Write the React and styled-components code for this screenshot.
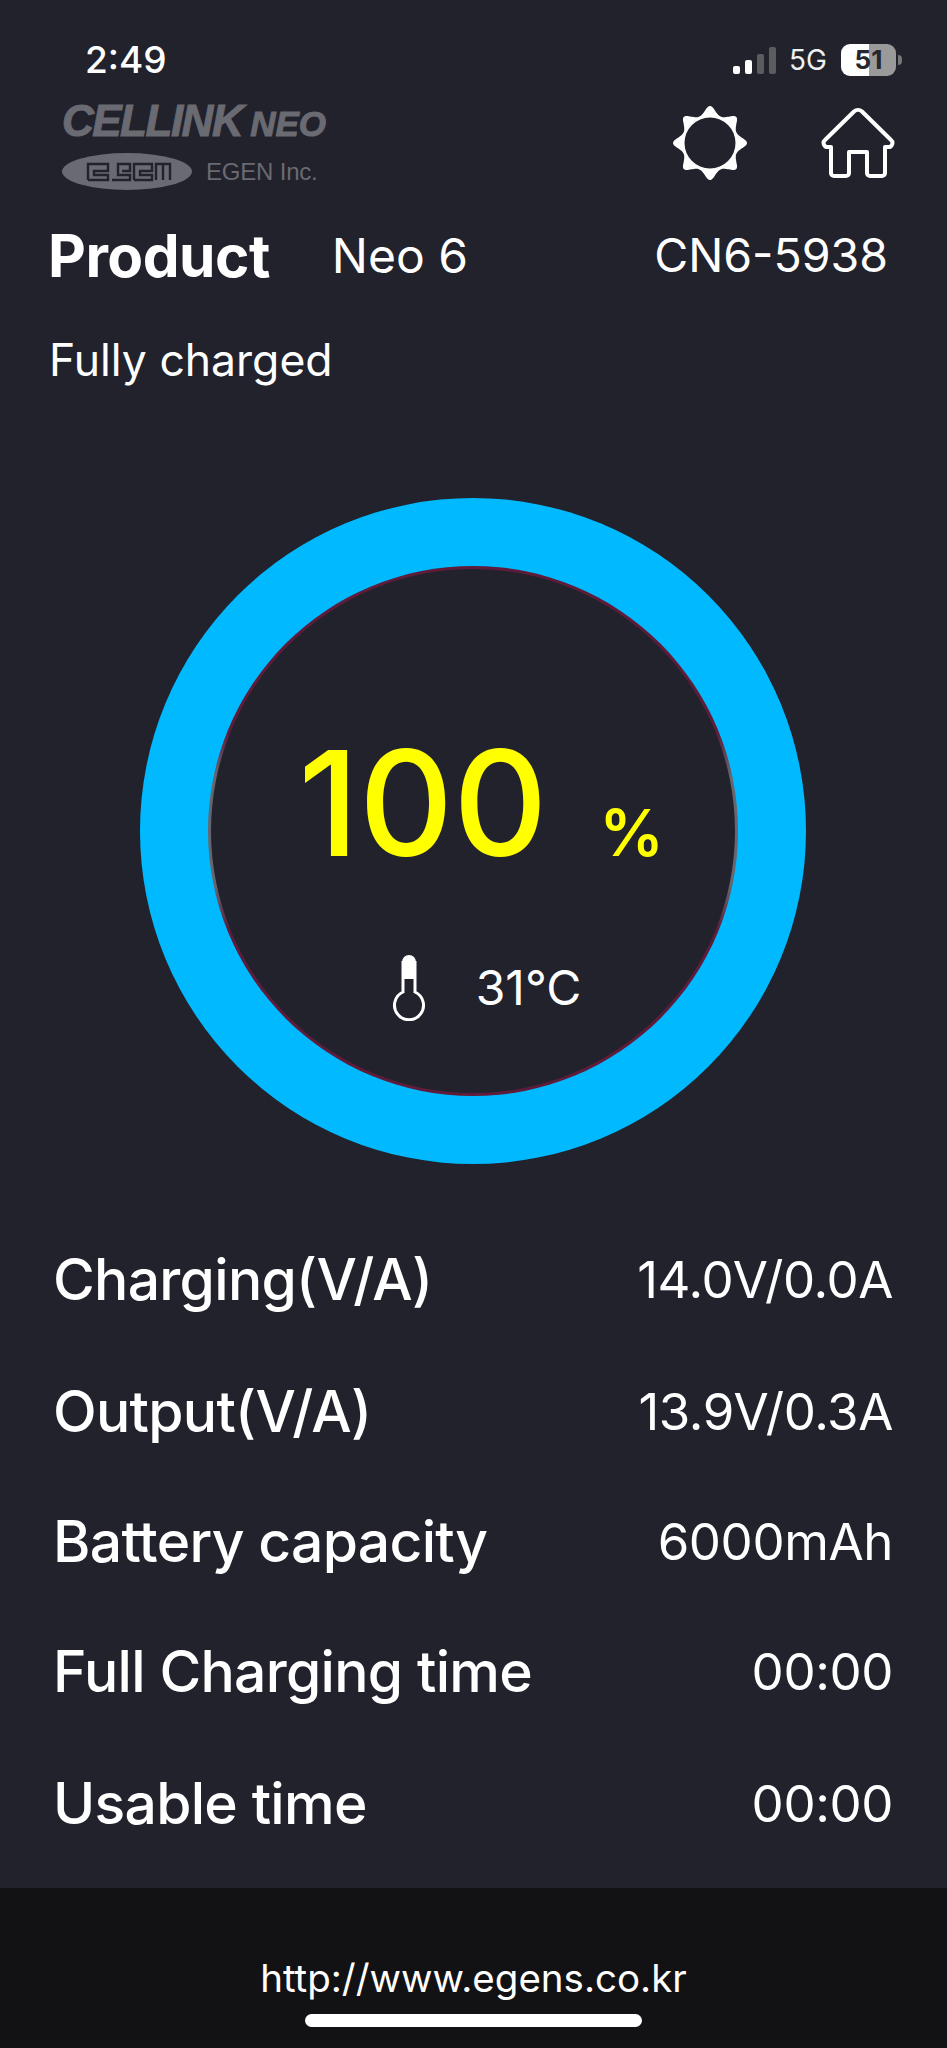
import React from 'react';
import styled, { createGlobalStyle } from 'styled-components';

const Bg = '#21222c';
const LogoGray = '#6a6a72';

const GlobalStyle = createGlobalStyle`
  html, body { margin: 0; padding: 0; background: ${Bg}; }
  * { box-sizing: border-box; }
`;

const Page = styled.div`
  width: 947px;
  height: 2048px;
  display: flex;
  flex-direction: column;
  background: ${Bg};
  color: #fff;
  font-family: Inter, "Liberation Sans", Arial, sans-serif;
  overflow: hidden;
`;

const StatusBar = styled.div`
  height: 76px;
  padding: 44px 45px 0 85px;
  display: flex;
  justify-content: space-between;
  align-items: center;
`;

const Time = styled.div`
  font-size: 37px;
  font-weight: 500;
  line-height: 32px;
`;

const StatusRight = styled.div`
  display: flex;
  align-items: center;
`;

const NetLabel = styled.div`
  font-size: 28px;
  line-height: 32px;
  margin: 0 14px 0 12px;
  color: #f0f0f0;
`;

const Battery = styled.div`
  width: 55px;
  height: 32px;
  border-radius: 9px;
  background: linear-gradient(90deg, #fff 0 51%, #9a9a9a 51% 100%);
  color: #26262c;
  font-size: 26px;
  font-weight: 700;
  line-height: 32px;
  text-align: center;
`;

const BatteryNub = styled.div`
  width: 4px;
  height: 10px;
  margin-left: 2px;
  border-radius: 0 4px 4px 0;
  background: #777;
`;

const TopBar = styled.div`
  height: 146px;
  padding: 27px 52px 0 62px;
  display: flex;
  justify-content: space-between;
  align-items: flex-start;
`;

const Logo = styled.div`
  display: flex;
  flex-direction: column;
  color: ${LogoGray};
  font-family: "Liberation Sans", Arial, sans-serif;
`;

const LogoMain = styled.div`
  display: flex;
  align-items: baseline;
  height: 50px;
  font-style: italic;
  font-weight: 700;
  line-height: 36px;
  -webkit-text-stroke: 1px ${LogoGray};
`;

const LogoBig = styled.span`
  font-size: 44px;
  letter-spacing: -1.5px;
  margin-right: 8px;
`;

const LogoSmall = styled.span`
  font-size: 35px;
`;

const LogoSub = styled.div`
  display: flex;
  align-items: center;
  gap: 14px;
  font-size: 24px;
  letter-spacing: -0.2px;
`;

const NavIcons = styled.div`
  display: flex;
  align-items: center;
  gap: 74px;
  margin-top: 3px;
`;

const ProductRow = styled.div`
  display: flex;
  align-items: center;
  height: 66px;
  padding: 0 59px 0 48px;
`;

const ProductLabel = styled.div`
  font-size: 58.5px;
  font-weight: 700;
  letter-spacing: -0.5px;
  margin-right: 62px;
`;

const ProductName = styled.div`
  font-size: 48px;
`;

const Serial = styled.div`
  margin-left: auto;
  font-size: 46.5px;
`;

const StateText = styled.div`
  margin-top: 44px;
  padding-left: 49px;
  font-size: 44.5px;
  line-height: 56px;
`;

const RingWrap = styled.div`
  display: flex;
  justify-content: center;
  margin-top: 110px;
  padding-right: 1px;
`;

const Ring = styled.div`
  width: 666px;
  height: 666px;
  border-radius: 50%;
  background: #00b9ff;
  display: flex;
  align-items: center;
  justify-content: center;
`;

const Dial = styled.div`
  width: 530px;
  height: 530px;
  border-radius: 50%;
  border: 3px solid transparent;
  background:
    linear-gradient(${Bg}, ${Bg}) padding-box,
    conic-gradient(
      #5e1c3a 0deg 68deg, #666670 78deg 102deg, #5e1c3a 112deg 248deg,
      #666670 258deg 282deg, #5e1c3a 292deg 360deg
    ) border-box;
  display: flex;
  flex-direction: column;
  align-items: center;
`;

const Reading = styled.div`
  display: flex;
  align-items: baseline;
  gap: 52px;
  margin-top: 182px;
  margin-left: 16px;
  color: #ffff00;
`;

const Percent = styled.div`
  font-size: 146px;
  font-weight: 500;
  letter-spacing: 0;
  line-height: 104px;
`;

const PercentSign = styled.div`
  font-size: 64px;
  font-weight: 600;
  line-height: 50px;
`;

const TempRow = styled.div`
  display: flex;
  align-items: center;
  gap: 50px;
  margin-top: 97px;
  margin-left: 27px;
`;

const TempText = styled.div`
  font-size: 48px;
  line-height: 54px;
`;

const Stats = styled.div`
  display: flex;
  flex-direction: column;
  margin-top: 49px;
  padding: 0 54px 0 53px;
`;

const StatRow = styled.div`
  height: ${p => p.$height}px;
  display: flex;
  justify-content: space-between;
  align-items: center;
`;

const StatName = styled.div`
  font-size: 57px;
  font-weight: 500;
  letter-spacing: -0.7px;
`;

const StatValue = styled.div`
  font-size: 51px;
  letter-spacing: -0.4px;
`;

const Footer = styled.div`
  margin-top: auto;
  height: 160px;
  background: #121214;
  display: flex;
  flex-direction: column;
  align-items: center;
`;

const FooterLink = styled.div`
  margin-top: 65px;
  font-size: 38.5px;
  line-height: 50px;
`;

const HomeBar = styled.div`
  margin-top: 11px;
  width: 337px;
  height: 13px;
  border-radius: 7px;
  background: #fff;
`;

const SignalBars = () => (
  <svg width="44" height="30" viewBox="0 0 44 30">
    <rect x="0" y="21" width="7" height="8" rx="2" fill="#fff" />
    <rect x="12" y="15" width="7" height="14" rx="2" fill="#fff" />
    <rect x="24" y="9" width="7" height="20" rx="2" fill="#5b5b60" />
    <rect x="36" y="2" width="7" height="27" rx="2" fill="#5b5b60" />
  </svg>
);

// scalloped disc with 8 points
const gearPath = () => {
  const pts = [];
  for (let i = 0; i < 180; i++) {
    const t = (i / 180) * Math.PI * 2;
    const c = Math.cos(8 * t);
    const r = 31.5 + 5.5 * (c > 0 ? Math.pow(c, 1.4) : -Math.pow(-c, 0.8) * 0.55);
    pts.push(`${(37 + r * Math.sin(t)).toFixed(2)} ${(37 - r * Math.cos(t)).toFixed(2)}`);
  }
  return `M${pts.join('L')}Z`;
};

const SettingsIcon = () => (
  <svg width="74" height="74" viewBox="0 0 74 74">
    <path d={gearPath()} fill="#fff" />
    <circle cx="37" cy="37" r="25.5" fill={Bg} />
  </svg>
);

const HomeIcon = () => (
  <svg width="74" height="74" viewBox="0 0 74 74" fill="none" stroke="#fff" strokeWidth="4" strokeLinejoin="round">
    <path d="M33 5.5a6 6 0 0 1 8 0L70 34a4 4 0 0 1-3 7H64V67a3 3 0 0 1-3 3H49a3 3 0 0 1-3-3V46H28V67a3 3 0 0 1-3 3H13a3 3 0 0 1-3-3V41H7a4 4 0 0 1-3-7Z" />
  </svg>
);

const ThermoIcon = () => (
  <svg width="34" height="66" viewBox="0 0 34 66">
    <path d="M10 24V7a7 7 0 0 1 14 0V24Z" fill="#fff" />
    <path d="M11 6V37A14.5 14.5 0 1 0 23 37V6" fill="none" stroke="#fff" strokeWidth="3" />
  </svg>
);

const EgenBadge = () => (
  <svg width="130" height="37" viewBox="0 0 130 37">
    <ellipse cx="65" cy="18.5" rx="65" ry="18.5" fill={LogoGray} />
    <g fill="none" stroke={Bg} strokeWidth="2.4">
      <path d="M26 27V11H46V18H32V22H46V27H26" />
      <path d="M50 27H68V22H56V11H68V18H60" />
      <path d="M72 27V11H90V18H78V22H90V27H72" />
      <path d="M94 27V11H108V27M101 11V27" />
    </g>
  </svg>
);

const stats = [
  { name: 'Charging(V/A)', value: '14.0V/0.0A', height: 132 },
  { name: 'Output(V/A)', value: '13.9V/0.3A', height: 133 },
  { name: 'Battery capacity', value: '6000mAh', height: 127 },
  { name: 'Full Charging time', value: '00:00', height: 132 },
  { name: 'Usable time', value: '00:00', height: 132 },
];

const App = () => (
  <Page>
    <GlobalStyle />
    <StatusBar>
      <Time>2:49</Time>
      <StatusRight>
        <SignalBars />
        <NetLabel>5G</NetLabel>
        <Battery>51</Battery>
        <BatteryNub />
      </StatusRight>
    </StatusBar>
    <TopBar>
      <Logo>
        <LogoMain>
          <LogoBig>CELLINK</LogoBig>
          <LogoSmall>NEO</LogoSmall>
        </LogoMain>
        <LogoSub>
          <EgenBadge />
          <span>EGEN Inc.</span>
        </LogoSub>
      </Logo>
      <NavIcons>
        <SettingsIcon />
        <HomeIcon />
      </NavIcons>
    </TopBar>
    <ProductRow>
      <ProductLabel>Product</ProductLabel>
      <ProductName>Neo 6</ProductName>
      <Serial>CN6-5938</Serial>
    </ProductRow>
    <StateText>Fully charged</StateText>
    <RingWrap>
      <Ring>
        <Dial>
          <Reading>
            <Percent>100</Percent>
            <PercentSign>%</PercentSign>
          </Reading>
          <TempRow>
            <ThermoIcon />
            <TempText>31°C</TempText>
          </TempRow>
        </Dial>
      </Ring>
    </RingWrap>
    <Stats>
      {stats.map(s => (
        <StatRow key={s.name} $height={s.height}>
          <StatName>{s.name}</StatName>
          <StatValue>{s.value}</StatValue>
        </StatRow>
      ))}
    </Stats>
    <Footer>
      <FooterLink>http://www.egens.co.kr</FooterLink>
      <HomeBar />
    </Footer>
  </Page>
);

export default App;
